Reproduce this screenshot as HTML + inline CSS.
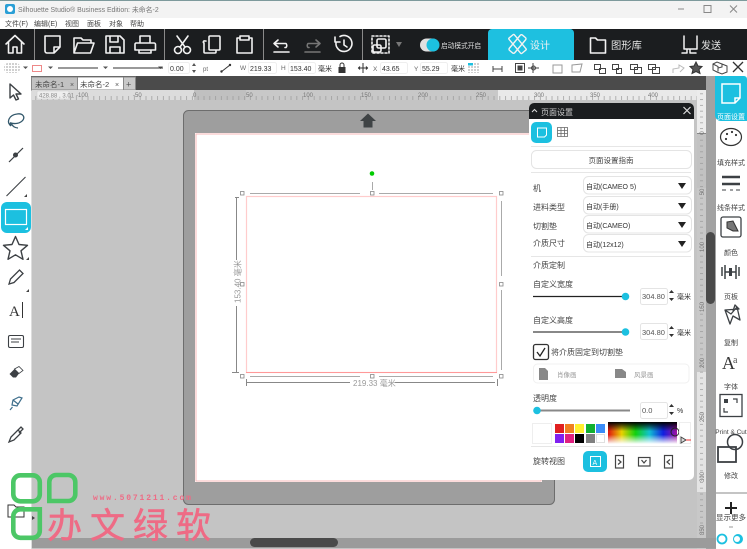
<!DOCTYPE html>
<html><head><meta charset="utf-8"><style>
html,body{margin:0;padding:0;background:#fff}
svg{display:block}
text{font-family:"Liberation Sans","Noto Sans CJK SC",sans-serif}
.w{fill:none;stroke:#f2f2f2;stroke-width:1.6;stroke-linejoin:round;stroke-linecap:round}
.l{font-size:8px;fill:#444}
.s{font-size:7px;fill:#333}
.r{font-size:7px;fill:#444;text-anchor:middle}
.sep{stroke:#e6e6e6;stroke-width:1}
.sel{fill:#fff;stroke:#e4e4e4}
</style></head><body>
<svg width="747" height="549" viewBox="0 0 747 549" xmlns="http://www.w3.org/2000/svg">
<defs>
<linearGradient id="sp" x1="0" x2="1" y1="0" y2="0"><stop offset="0" stop-color="#e01010"/><stop offset=".2" stop-color="#e8d000"/><stop offset=".4" stop-color="#10d010"/><stop offset=".6" stop-color="#10c0d0"/><stop offset=".8" stop-color="#1020e0"/><stop offset="1" stop-color="#a010a0"/></linearGradient>
<linearGradient id="bw" x1="0" x2="0" y1="0" y2="1"><stop offset="0" stop-color="#000"/><stop offset=".42" stop-color="#000" stop-opacity="0"/><stop offset=".58" stop-color="#fff" stop-opacity="0"/><stop offset="1" stop-color="#fff"/></linearGradient>
<pattern id="rul" width="5.8" height="10" patternUnits="userSpaceOnUse"><path d="M1 6V10" stroke="#999" stroke-width=".7"/></pattern>
<pattern id="rulv" width="10" height="5.8" patternUnits="userSpaceOnUse"><path d="M0 1H3" stroke="#999" stroke-width=".7"/></pattern>
<pattern id="dot" width="3" height="3" patternUnits="userSpaceOnUse"><rect width="2" height="2" fill="#d0d0d0"/></pattern>
</defs>
<rect width="747" height="549" fill="#fff"/>
<!-- title -->
<rect width="747" height="18" fill="#f3f3f3"/>
<rect x="0" y="0" width="747" height="1" fill="#7d9a9c"/>
<rect x="5" y="4" width="10" height="10" rx="2" fill="#2a9fd6"/><circle cx="10" cy="9" r="3" fill="#fff"/>
<text x="18" y="12" font-size="6.900" fill="#777">Silhouette Studio® Business Edition: 未命名-2</text>
<path d="M678 9h6" stroke="#888"/><rect x="704" y="5.500" width="7" height="7" fill="none" stroke="#888"/><path d="M730 5.500l7 7M737 5.500l-7 7" stroke="#888"/>
<!-- menu -->
<rect y="18" width="747" height="11" fill="#fff"/>
<g font-size="7" fill="#444"><text x="5" y="26">文件(F)</text><text x="34" y="26">编辑(E)</text><text x="65" y="26">视图</text><text x="87" y="26">面板</text><text x="109" y="26">对象</text><text x="130" y="26">帮助</text></g>
<!-- black toolbar -->
<rect y="29" width="747" height="31" fill="#1b1d1f"/>
<g stroke="#8a8a8a"><path d="M34.500 29v31M164.500 29v31M263.500 29v31M362.500 29v31"/></g>
<g class="w">
<path d="M6 44L15 35.500 24 44M8.500 42V53h4.500v-6h4v6h4.500V42"/>
<path d="M45 36h15v11l-6 6H47a2 2 0 0 1-2-2zM60 47h-6v6"/>
<path d="M74 53V38h7l2 2h8v3M74 53l3.500-10H94L90.500 53z"/>
<path d="M106 36h14l4 4v13h-18zM110 36v6h8v-6M110 53v-6h10v6"/>
<path d="M140 42v-6h10v6M136 43h18a1.500 1.500 0 0 1 1.500 1.500V50H135v-5.500A1.500 1.500 0 0 1 136 43zM139 50h12v3h-12z"/>
<circle cx="178" cy="50" r="3.500"/><circle cx="187" cy="50" r="3.500"/><path d="M180 47L188 36M185 47L177 36"/>
<path d="M206 41h-1a1 1 0 0 0-1 2v9a1 1 0 0 0 1 1h10a1 1 0 0 0 1-1v-2M210 36h9a1 1 0 0 1 1 1v12a1 1 0 0 1-1 1h-9a1 1 0 0 1-1-1V37a1 1 0 0 1 1-1z"/>
<path d="M240 38h-3v15h15V38h-3M240 36h9v4h-9z"/>
<path d="M278 40l-4 3.500 4 3.500M274 43.500h12a3 3 0 0 1 0 4h-1M274 52h15"/>
<path d="M340 36.500a8 8 0 1 1-4 6M335 37v5h5M344 40v5l3 2"/>
</g>
<path d="M316 40l4 3.500-4 3.500M320 43.500h-12a3 3 0 0 0 0 4h1M305 52h15" class="w" style="stroke:#777"/>
<g class="w"><rect x="372" y="36" width="17" height="17" stroke-dasharray="2 2"/><rect x="377" y="39" width="9" height="9" rx="1.500"/><rect x="373" y="45" width="8" height="7" rx="1.500"/></g>
<path d="M396 42h6l-3 5z" fill="#777"/>
<rect x="420" y="38.500" width="19" height="13" rx="6.500" fill="#e0e0e0"/><circle cx="433" cy="45" r="6.500" fill="#1cc0e0"/>
<text x="441" y="48" font-size="6.700" fill="#ddd">启动模式开启</text>
<path d="M488 60V33a4 4 0 0 1 4-4h78a4 4 0 0 1 4 4v27z" fill="#1ec0e0"/>
<g fill="none" stroke="#f2f2f2" stroke-width="1.400"><rect x="514" y="34" width="7" height="20" rx="1.500" transform="rotate(40 517.500 44)"/><rect x="514" y="34" width="7" height="20" rx="1" transform="rotate(-40 517.500 44)"/></g>
<text x="530" y="49" font-size="10" fill="#f2f2f2">设计</text>
<path class="w" d="M590.500 53V38h5l2 2h8v13z"/>
<text x="611" y="49" font-size="10.300" fill="#e6e6e6">图形库</text>
<path class="w" d="M684 36v13h13V36M687 49v4h-5M690 49v4h6" style="stroke-width:1.500"/>
<text x="701" y="49" font-size="10" fill="#e6e6e6">发送</text>
<!-- property row -->
<rect y="60" width="747" height="16" fill="#fff"/>
<rect x="4" y="63" width="16" height="10" rx="4" fill="url(#dot)"/>
<g fill="#555"><path d="M23 66.500h5l-2.500 2.500zM48 66.500h5l-2.500 2.500zM103 66.500h5l-2.500 2.500zM158 66.500h5l-2.500 2.500z"/></g>
<rect x="32.500" y="65.500" width="9" height="6" fill="#fff" stroke="#e88"/>
<path d="M58 68h40M113 68h50" stroke="#333"/>
<rect x="168.500" y="62.500" width="21" height="11" rx="2" fill="#fff" stroke="#eee"/><text x="170" y="71" class="s">0.00</text>
<path d="M192 66l2-3 2 3zM192 70l2 3 2-3z" fill="#555"/><text x="203" y="71" font-size="6" fill="#666">pt</text>
<path d="M221 72l9-7" stroke="#333" stroke-width="1"/><circle cx="221.500" cy="71.500" r="1.200" fill="#333"/><circle cx="230" cy="65" r="1.200" fill="#333"/>
<text x="240" y="70" font-size="6.500" fill="#666">W</text><text x="281" y="70" font-size="6.500" fill="#666">H</text>
<rect x="248.500" y="62.500" width="28" height="11" rx="2" fill="#fff" stroke="#eee"/><text x="250" y="71" class="s">219.33</text>
<rect x="288.500" y="62.500" width="27" height="11" rx="2" fill="#fff" stroke="#eee"/><text x="290" y="71" class="s">153.40</text>
<text x="318" y="71" font-size="7" fill="#333">毫米</text>
<rect x="338.500" y="67" width="7" height="6" fill="#333"/><path d="M340 67v-2a2 2 0 0 1 4 0v2" fill="none" stroke="#333"/>
<path d="M363 63v10M358 68h10M360 66.500l-1.500 1.500 1.500 1.500M366 66.500l1.500 1.500-1.500 1.500" stroke="#333" fill="none"/>
<text x="373" y="71" font-size="6.500" fill="#666">X</text><rect x="380.500" y="62.500" width="27" height="11" rx="2" fill="#fff" stroke="#eee"/><text x="382" y="71" class="s">43.65</text>
<text x="414" y="71" font-size="6.500" fill="#666">Y</text><rect x="420.500" y="62.500" width="27" height="11" rx="2" fill="#fff" stroke="#eee"/><text x="422" y="71" class="s">55.29</text>
<text x="451" y="71" font-size="7" fill="#333">毫米</text>
<rect x="468" y="63" width="11" height="10" fill="url(#dot)"/><rect x="468" y="63" width="5" height="2.500" fill="#1cc0e0"/>
<g fill="none" stroke="#444" stroke-width="1">
<path d="M493 69h9M493 66v6M502 66v6"/><rect x="515.500" y="63.500" width="9" height="9"/><rect x="518" y="66" width="4" height="4" fill="#444"/>
<path d="M533 63v10M528 68h11"/><circle cx="533.500" cy="68" r="2"/>
<g stroke="#999"><rect x="553" y="65" width="9" height="8"/><path d="M572 65l10-1-2 8h-8z"/></g>
<rect x="594.500" y="64.500" width="6" height="5"/><rect x="599.500" y="68.500" width="6" height="5"/><rect x="612.500" y="64.500" width="6" height="5"/><rect x="616.500" y="68.500" width="5" height="5"/>
<rect x="630.500" y="64.500" width="7" height="5"/><rect x="634.500" y="67.500" width="7" height="6"/><rect x="648.500" y="64.500" width="7" height="5"/><rect x="652.500" y="67.500" width="7" height="6"/>
<path d="M673 73v-4l6-1 0-3 5 3-4 4" stroke="#bbb"/></g>
<path d="M696 62l2 4 4 .5-3 3 1 4-4-2-4 2 1-4-3-3 4-.5z" fill="#555" stroke="#333"/>
<path d="M713 64l4-2 5 2 5 2v6l-5 2-5-2-4-2zM713 64l5 2.500v5M722 64v3l-4 1" fill="none" stroke="#444"/>
<path d="M733 62l10 10M743 62l-10 10" stroke="#333" stroke-width="1.300"/>
<!-- left toolbar -->
<rect y="76" width="31" height="473" fill="#fff"/><rect x="31" y="76" width="1" height="473" fill="#ddd"/>
<!-- tabs -->
<rect x="31" y="76" width="675" height="14" fill="#4b4b4b"/>
<rect x="31.500" y="77" width="46" height="13" fill="#c2c2c2" stroke="#888"/>
<rect x="77.500" y="77" width="46" height="13" fill="#fff" stroke="#888"/>
<rect x="123.500" y="77" width="12" height="13" fill="#c9c9c9" stroke="#888"/>
<text x="35" y="87" font-size="7.500" fill="#444">未命名-1</text><text x="80" y="87" font-size="7.500" fill="#444">未命名-2</text>
<text x="70" y="87" font-size="7" fill="#555">×</text><text x="115" y="87" font-size="7" fill="#555">×</text><text x="126" y="87.500" font-size="9" fill="#555">+</text>
<!-- canvas -->
<rect x="32" y="90" width="684" height="459" fill="#c4c4c4"/>
<rect x="32" y="90" width="674" height="10" fill="#dcdcdc"/>
<rect x="194" y="90" width="52" height="10" fill="#c0c0c0"/><rect x="246" y="90" width="252" height="10" fill="#c8c8c8"/><rect x="498" y="90" width="208" height="10" fill="#e9e9e9"/>
<rect x="32" y="90" width="674" height="10" fill="url(#rul)"/>
<g font-size="6" fill="#777"><text x="76" y="97">-100</text><text x="133" y="97">-50</text><text x="193" y="97">0</text><text x="246" y="97">50</text><text x="303" y="97">100</text><text x="361" y="97">150</text><text x="418" y="97">200</text><text x="476" y="97">250</text><text x="534" y="97">300</text><text x="590" y="97">350</text><text x="648" y="97">400</text></g>
<rect x="37" y="91" width="32" height="8" rx="1" fill="#eee" stroke="#ccc" stroke-width=".5"/><text x="39" y="97.500" font-size="6" fill="#888">428.88 , 3.01</text>
<!-- vertical ruler + right scrollbar -->
<rect x="697" y="90" width="9" height="459" fill="#e4e4e4"/>
<rect x="697" y="90" width="9" height="43" fill="#ececec"/>
<rect x="697" y="133" width="9" height="55" fill="#c2c2c2"/>
<rect x="697" y="188" width="9" height="184" fill="#c8c8c8"/>
<rect x="697" y="492" width="9" height="57" fill="#c8c8c8"/>
<rect x="697" y="90" width="9" height="459" fill="url(#rulv)"/>
<path d="M697 133.500h9" stroke="#888"/>
<g font-size="6" fill="#777" text-anchor="middle"><text transform="translate(704 133) rotate(-90)">0</text><text transform="translate(704 192) rotate(-90)">50</text><text transform="translate(704 247) rotate(-90)">100</text><text transform="translate(704 307) rotate(-90)">150</text><text transform="translate(704 363) rotate(-90)">200</text><text transform="translate(704 417) rotate(-90)">250</text><text transform="translate(704 477) rotate(-90)">300</text><text transform="translate(704 530) rotate(-90)">350</text></g>
<rect x="706" y="76" width="10" height="473" fill="#a2a2a2"/>
<rect x="706" y="232" width="9" height="72" rx="4.500" fill="#4a4a4a"/>
<!-- bottom scroll -->
<rect x="32" y="538" width="684" height="10" fill="#9b9b9b"/>
<rect x="250" y="538" width="88" height="9" rx="4.500" fill="#4a4a4a"/>
<!-- mat -->
<rect x="183.500" y="110.500" width="371" height="394" rx="5" fill="#9e9e9e" stroke="#6d6d6d"/>
<path d="M368 113.500l8 7.500h-3.500v6.500h-9V121h-3.500z" fill="#3f4345"/>
<rect x="195" y="133" width="347" height="349" fill="#fff"/>
<rect x="196" y="134" width="345" height="347" fill="#fff" stroke="#f8b8b8" stroke-width="1"/>
<!-- object -->
<rect x="246.500" y="196.500" width="250" height="176" fill="#fff" stroke="#fcc" stroke-width="1.200"/>
<path d="M246 372.500h251" stroke="#f99"/>
<circle cx="372" cy="173.500" r="2.300" fill="#0c0"/>
<g stroke="#aaa" fill="none"><path d="M372.500 182v8M250 193.500h110M379 193.500h114M501.500 201v75M501.500 290v80M250 376.500h110M379 376.500h114"/></g>
<g fill="#fff" stroke="#888" stroke-width=".8"><rect x="240.500" y="191.500" width="3.500" height="3.500"/><rect x="370.500" y="191.500" width="3.500" height="3.500"/><rect x="499.500" y="191.500" width="3.500" height="3.500"/><rect x="240.500" y="282.500" width="3.500" height="3.500"/><rect x="499.500" y="282.500" width="3.500" height="3.500"/><rect x="240.500" y="374.500" width="3.500" height="3.500"/><rect x="370.500" y="374.500" width="3.500" height="3.500"/><rect x="499.500" y="374.500" width="3.500" height="3.500"/></g>
<path d="M236.500 198v62M236.500 306v66M235 197.500h4M232 372.500h7M247 382.500h103M395 382.500h100M246.500 379v7M497.500 379v7" stroke="#888" fill="none"/>
<text x="353" y="386" font-size="8" fill="#999">219.33 毫米</text>
<text transform="translate(240.500 303) rotate(-90)" font-size="8" fill="#999">153.40 毫米</text>
<!-- left icons -->
<path d="M10 84l0 14 3.500-3 2.500 5 2.500-1-2.500-5 5 0z" fill="#fff" stroke="#3c4044" stroke-width="1.400" stroke-linejoin="round"/>
<path d="M11 126c-5-4-2-11 6-12 6-1 8 3 6 6-3 4-9 4-12 3 1 3 4 5 7 5" fill="none" stroke="#33586b" stroke-width="1.300"/><circle cx="11" cy="124" r="1.500" fill="#33586b"/>
<path d="M9 162l14-14" stroke="#3c4044" stroke-width="1.200"/><circle cx="15.500" cy="155" r="2.500" fill="#3c4044"/>
<path d="M6.500 196l19-19" stroke="#3c4044" stroke-width="1.100"/>
<path d="M27 197v-3l-3 3z" fill="#444"/>
<rect x="1" y="202" width="30" height="31" rx="6" fill="#1cc0e0"/><rect x="5.500" y="209.500" width="21" height="15" fill="none" stroke="#fff" stroke-width="1.200"/><path d="M28 230v-3l-3 3z" fill="#fff"/>
<path d="M15.500 236.500l3.500 8 8.500.8-6.500 5.500 2 8.500-7.500-4.500-7.500 4.500 2-8.500-6.500-5.500 8.500-.8z" fill="none" stroke="#3c4044" stroke-width="1.400" stroke-linejoin="round"/>
<path d="M29 260v-3l-3 3z" fill="#444"/>
<path d="M9 284l1.500-5 9-9 3.500 3.500-9 9z" fill="none" stroke="#3c4044" stroke-width="1.300"/><path d="M29 292v-3l-3 3z" fill="#444"/>
<text x="9" y="316" font-size="15" fill="#333" style="font-family:'Liberation Serif',serif">A</text><path d="M22.500 302v16" stroke="#333"/>
<rect x="8.500" y="335.500" width="15" height="12" rx="1.500" fill="none" stroke="#3c4044" stroke-width="1.100"/><path d="M11 339h10M11 342h8" stroke="#3c4044"/>
<path d="M9.500 374l5-5 4.500 4.500-3 4h-3z" fill="#3c4044"/><path d="M14.500 369l4.500-2.500 4 4-4 3z" fill="#fff" stroke="#3c4044" stroke-width=".8"/>
<path d="M12 405l1-5 6-3 3 1-5 8zM13 400l5 4M10 410l2.500-3" fill="none" stroke="#3f6f8c" stroke-width="1.200"/>
<path d="M9 442l2-5 7-7 3 3-7 7zM17 431l4-4 2 2-4 4" fill="none" stroke="#3c4044" stroke-width="1.300"/>
<path d="M8 517v-12h6l2 2h8v10z" fill="none" stroke="#333"/><path d="M32 516l3 2-3 2z" fill="#444"/>
<!-- right panel -->
<rect x="716" y="76" width="31" height="473" fill="#fff"/>
<path d="M715 76h29a3 3 0 0 1 3 3v42h-26a6 6 0 0 1-6-6z" fill="#1cc0e0"/>
<path d="M722 84h18v14l-5 5h-13zM740 98h-5v5" fill="none" stroke="#fff" stroke-width="1.500"/>
<text class="r" x="731" y="119" style="fill:#fff">页面设置</text>
<ellipse cx="731" cy="137" rx="10.500" ry="8.500" fill="none" stroke="#333" stroke-width="1.200"/><g fill="#333"><circle cx="727" cy="134" r="1.100"/><circle cx="732" cy="132" r="1.100"/><circle cx="736" cy="135" r="1.100"/><circle cx="726" cy="139" r="1.100"/></g>
<text class="r" x="731" y="165">填充样式</text>
<path d="M722 177h18M722 184h18" stroke="#3c4044" stroke-width="2.500"/><path d="M722 190h4M730 190h3M736 190h4" stroke="#3c4044"/>
<text class="r" x="731" y="210">线条样式</text>
<rect x="721" y="217" width="20" height="20" rx="2" fill="none" stroke="#3c4044" stroke-width="1.300"/><path d="M727 222l6-1 3 6 2 4-5 0-6-3z" fill="#777" stroke="#333"/>
<text class="r" x="731" y="255">颜色</text>
<path d="M722 267v9M725 265v14M736 265v14M739 267v9M725 272h11" fill="none" stroke="#3c4044" stroke-width="1.500"/>
<rect x="729" y="268" width="3" height="8" fill="#3c4044"/>
<text class="r" x="731" y="299">页板</text>
<path d="M725 310l5 14 3-8 7 4-3-13-6 7-6-4 14-1-4-4-2 6" fill="none" stroke="#3c4044" stroke-width="1.300" stroke-linejoin="round"/>
<text class="r" x="731" y="345">复制</text>
<text x="722" y="369" font-size="18" fill="#333" style="font-family:'Liberation Serif',serif">A</text><text x="733" y="363" font-size="10" fill="#555" style="font-family:'Liberation Serif',serif">a</text>
<text class="r" x="731" y="389">字体</text>
<rect x="720" y="394.500" width="22" height="22" fill="none" stroke="#3c4044" stroke-width="1.300"/><rect x="724" y="399" width="4" height="4" fill="#3c4044"/><path d="M733 399h4v4M724 408v4h4" fill="none" stroke="#3c4044" stroke-width="1.200"/>
<text class="r" x="731" y="434" style="font-size:6.500px">Print &amp; Cut</text>
<rect x="718" y="447" width="18" height="15" fill="none" stroke="#3c4044" stroke-width="1.800"/><circle cx="735" cy="442" r="7.500" fill="none" stroke="#3c4044" stroke-width="1.500"/>
<text class="r" x="731" y="478">修改</text>
<path d="M716 493h31" stroke="#888"/>
<path d="M731 502v12M725 508h12" stroke="#222" stroke-width="2"/>
<text class="r" x="731" y="520" style="font-size:7.500px">显示更多</text><path d="M729 527h4" stroke="#999"/>
<circle cx="722" cy="539" r="4.500" fill="none" stroke="#1cc0e0" stroke-width="1.800"/><circle cx="738" cy="539" r="5" fill="#1cc0e0"/><circle cx="737" cy="539" r="3" fill="#fff"/>
<!-- panel -->
<rect x="529" y="103" width="165" height="377" rx="5" fill="#fff"/>
<path d="M529 119v-11a5 5 0 0 1 5-5h155a5 5 0 0 1 5 5v11z" fill="#1b1d1f"/>
<path d="M532 112l2.500-2.500 2.500 2.500" fill="none" stroke="#ddd"/><text x="541" y="115" font-size="8" fill="#ccc">页面设置</text>
<path d="M683.500 107l7 7M690.500 107l-7 7" stroke="#ddd" stroke-width="1.200"/>
<rect x="531" y="122" width="21" height="21" rx="5" fill="#1cc0e0"/><path d="M537.500 128h9v7l-2 2h-7z" fill="none" stroke="#fff"/>
<path d="M557.500 127.500h10v9h-10zM561 127.500v9M564.500 127.500v9M557.500 130.500h10M557.500 133.500h10" fill="none" stroke="#666" stroke-width=".8"/>
<path class="sep" d="M531 146.500h160M531 172.500h160M531 256.500h160M531 446.500h160"/>
<rect x="531.500" y="150.500" width="160" height="18" rx="5" class="sel"/><text x="611" y="163" text-anchor="middle" font-size="7.500" fill="#444">页面设置指南</text>
<g class="sel"><rect x="583.500" y="176.500" width="108" height="17.500" rx="5"/><rect x="583.500" y="196.500" width="108" height="17.500" rx="5"/><rect x="583.500" y="215.500" width="108" height="17.500" rx="5"/><rect x="583.500" y="234.500" width="108" height="17.500" rx="5"/></g>
<g font-size="7" fill="#333"><text x="586" y="189">自动(CAMEO 5)</text><text x="586" y="209">自动(手册)</text><text x="586" y="228">自动(CAMEO)</text><text x="586" y="247">自动(12x12)</text></g>
<g fill="#222"><path d="M678 183h8l-4 6zM678 203h8l-4 6zM678 222h8l-4 6zM678 241h8l-4 6z"/></g>
<g class="l"><text x="533" y="191">机</text><text x="533" y="210">进料类型</text><text x="533" y="229">切割垫</text><text x="533" y="246">介质尺寸</text><text x="533" y="268">介质定制</text><text x="533" y="287">自定义宽度</text><text x="533" y="323">自定义高度</text><text x="551" y="355">将介质固定到切割垫</text><text x="533" y="401">透明度</text><text x="533" y="464">旋转视图</text></g>
<path d="M533 296.500h92" stroke="#222" stroke-width="1.200"/><circle cx="625.500" cy="296.500" r="3.800" fill="#1cc0e0"/>
<path d="M533 332h92" stroke="#888" stroke-width="2"/><circle cx="625.500" cy="332" r="3.800" fill="#1cc0e0"/>
<path d="M537 410.500h93" stroke="#888" stroke-width="2"/><circle cx="537" cy="410.500" r="3.800" fill="#1cc0e0"/>
<g class="sel"><rect x="640.500" y="288.500" width="27" height="16" rx="2"/><rect x="640.500" y="323.500" width="27" height="16" rx="2"/><rect x="640.500" y="402.500" width="27" height="16" rx="2"/></g>
<g font-size="7.500" fill="#555"><text x="642" y="299">304.80</text><text x="642" y="335">304.80</text><text x="642" y="413">0.0</text></g>
<g fill="#333"><path d="M669 293l2.500-3 2.500 3zM669 298l2.500 3 2.500-3zM669 329l2.500-3 2.500 3zM669 334l2.500 3 2.500-3zM669 407l2.500-3 2.500 3zM669 412l2.500 3 2.500-3z"/></g>
<text x="677" y="299" class="s">毫米</text><text x="677" y="335" class="s">毫米</text><text x="677" y="413" class="s">%</text>
<rect x="533.500" y="344.500" width="15" height="15" rx="2" fill="#fff" stroke="#333" stroke-width="1.300"/><path d="M537 352l3 4 5-8" fill="none" stroke="#222" stroke-width="1.300"/>
<rect x="533.500" y="364" width="155.500" height="19" rx="4" fill="#fff" stroke="#f0f0f0"/>
<path d="M539 368h6l3 3v9h-9z" fill="#888"/><path d="M615 369h7l4 3v6h-11z" fill="#888"/>
<text x="557" y="377" font-size="6.500" fill="#999">肖像画</text><text x="634" y="377" font-size="6.500" fill="#999">风景画</text>
<rect x="532.500" y="423.500" width="19" height="20" fill="#fff" stroke="#eee"/>
<g><rect x="555" y="424" width="9" height="9" fill="#e02020"/><rect x="565" y="424" width="9" height="9" fill="#f08020"/><rect x="575" y="424" width="9" height="9" fill="#fff030"/><rect x="586" y="424" width="9" height="9" fill="#10b030"/><rect x="596" y="424" width="9" height="9" fill="#3a8cf8"/><rect x="555" y="434" width="9" height="9" fill="#8020f0"/><rect x="565" y="434" width="9" height="9" fill="#e02080"/><rect x="575" y="434" width="9" height="9" fill="#000"/><rect x="586" y="434" width="9" height="9" fill="#808080"/><rect x="596.500" y="434.500" width="8" height="8" fill="#fff" stroke="#e0e0e0"/></g>
<rect x="608" y="422" width="69" height="22" fill="url(#sp)"/><rect x="608" y="422" width="69" height="22" fill="url(#bw)"/>
<circle cx="675" cy="432" r="4" fill="none" stroke="#222"/>
<rect x="679.500" y="422.500" width="11" height="21" fill="#fff" stroke="#eee"/><path d="M681 437l5 3-5 3z" fill="#ddd" stroke="#444"/><path d="M686 440h5" stroke="#e33"/>
<rect x="583" y="451" width="24" height="21" rx="5" fill="#1cc0e0"/><rect x="590.500" y="456.500" width="10" height="10" fill="none" stroke="#fff"/><text x="592.500" y="465" font-size="7" fill="#fff">A</text>
<g fill="none" stroke="#444" stroke-width="1.200"><rect x="615.500" y="455.500" width="8" height="12.500"/><path d="M618 459.500l3 2.500-3 2.500"/><rect x="638.500" y="457.500" width="11.500" height="8.500"/><path d="M641.500 460l2.500 3 2.500-3"/><rect x="664.500" y="455.500" width="8" height="12.500"/><path d="M670 459.500l-3 2.500 3 2.500"/></g>
<!-- watermark -->
<g fill="none" stroke="#4cc766" stroke-width="4.600"><rect x="13.300" y="475.300" width="26.500" height="26" rx="7"/><path d="M49.300 501V482a7 7 0 0 1 7-7h12a7 7 0 0 1 7 7v12a7 7 0 0 1-7 7z"/><path d="M39.800 509.300H20.300a7 7 0 0 0-7 7v14.500a7 7 0 0 0 7 7h12.500a7 7 0 0 0 7-7z"/></g>
<text x="93" y="500" font-size="8" font-weight="bold" fill="#ee6b85" letter-spacing="1.850" style="font-family:'Liberation Mono',monospace">www.5071211.com</text>
<text x="47" y="538" font-size="35" fill="#ee6b85" stroke="#ee6b85" stroke-width=".6" letter-spacing="8" style="font-family:'Noto Sans CJK SC',sans-serif">办文绿软</text>
</svg>
</body></html>
